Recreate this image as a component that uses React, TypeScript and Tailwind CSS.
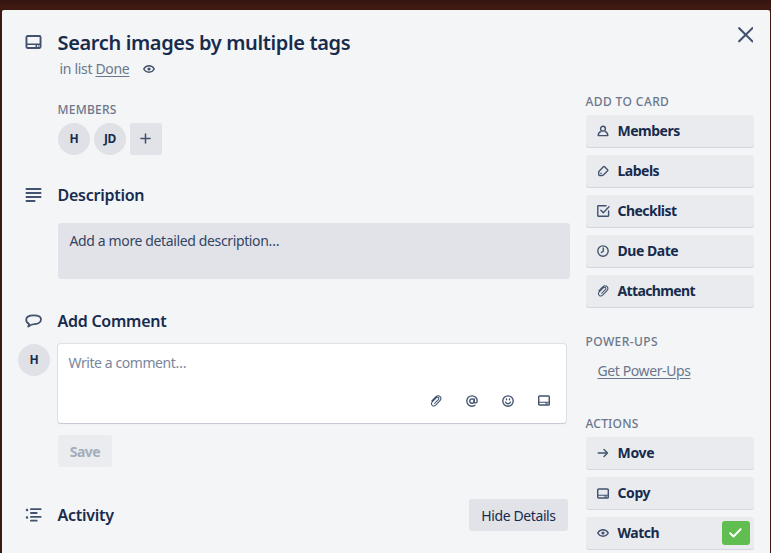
import React from "react";

type IconProps = { className?: string };

const CardIcon = ({ className = "" }: IconProps) => (
  <svg viewBox="0 0 16 14" fill="none" stroke="currentColor" className={className}>
    <rect x="0.95" y="0.95" width="14.1" height="12.1" rx="1.2" strokeWidth="1.9" />
    <path d="M1 9.300h14M10.800 9.300v3.500" strokeWidth="1.5" />
    <path d="M12.400 11h1.200" strokeWidth="1.200" />
  </svg>
);

const EyeIcon = ({ className = "" }: IconProps) => (
  <svg viewBox="0 0 12 8" fill="none" stroke="currentColor" className={className}>
    <path d="M.7 4C2 1.800 3.900.8 6 .8S10 1.800 11.300 4C10 6.200 8.100 7.200 6 7.200S2 6.200.7 4z" strokeWidth="1.4" strokeLinejoin="round" />
    <circle cx="6" cy="4" r="1.600" fill="currentColor" stroke="none" />
  </svg>
);

const PaperclipIcon = ({ className = "" }: IconProps) => (
  <svg viewBox="0 0 12 12" fill="none" stroke="currentColor" strokeWidth="1.050" strokeLinecap="round" className={className}>
    <path d="M1.800 5.800 5.700 2C7.100.6 9.100.7 10.100 1.700c1 1.100 1 2.700-.1 3.900L5.900 9.900c-1.100 1.100-2.700 1.300-3.700.4-1-1-.8-2.500.3-3.600l3.900-4c.7-.7 1.600-.7 2.100-.1.500.6.400 1.300-.2 2L4.600 8.500" />
  </svg>
);

const PersonIcon = ({ className = "" }: IconProps) => (
  <svg viewBox="0 0 12 12" fill="none" stroke="currentColor" strokeWidth="1.400" strokeLinejoin="round" className={className}>
    <circle cx="6" cy="3.700" r="2.400" />
    <path d="M3.900 6.300C2.100 7.100 1.200 8.500 1.200 10.600h9.600c0-2.100-.9-3.500-2.700-4.300" />
  </svg>
);

const LabelIcon = ({ className = "" }: IconProps) => (
  <svg viewBox="0 0 12 12" fill="none" stroke="currentColor" strokeWidth="1.350" strokeLinejoin="round" className={className}>
    <path d="M6.400 1.700q.6-.6 1.200 0l3 3q.5.500 0 1.100L6.400 9.900q-.6.600-1.400.6H2.600q-.9 0-.9-.9V7.300q0-.8.600-1.400z" />
    <circle cx="4" cy="8.200" r=".8" fill="currentColor" stroke="none" />
  </svg>
);

const ChecklistIcon = ({ className = "" }: IconProps) => (
  <svg viewBox="0 0 13 12" fill="none" stroke="currentColor" strokeWidth="1.400" strokeLinecap="round" strokeLinejoin="round" className={className}>
    <path d="M9 .8H1.200q-.4 0-.4.4v9.600q0 .4.400.4h10q.4 0 .4-.4V6" />
    <path d="m3.800 5.200 2.500 2.600 5.700-6" />
  </svg>
);

const ClockIcon = ({ className = "" }: IconProps) => (
  <svg viewBox="0 0 12 12" fill="none" stroke="currentColor" strokeWidth="1.350" strokeLinecap="round" className={className}>
    <circle cx="6" cy="6" r="5.200" />
    <path d="M6.300 3v3.100L4.400 7.500" />
  </svg>
);

const ArrowIcon = ({ className = "" }: IconProps) => (
  <svg viewBox="0 0 12 10" fill="none" stroke="currentColor" strokeWidth="1.400" strokeLinecap="round" strokeLinejoin="round" className={className}>
    <path d="M1.200 5h9.300M7 1.500 10.500 5 7 8.500" />
  </svg>
);

const TextIcon = ({ className = "" }: IconProps) => (
  <svg viewBox="0 0 17 14" stroke="currentColor" strokeWidth="1.800" strokeLinecap="round" className={className}>
    <path d="M1.400 1h14.200M1.400 5h14.200M1.400 9h14.200M1.400 13h8.200" />
  </svg>
);

const BubbleIcon = ({ className = "" }: IconProps) => (
  <svg viewBox="0 0 17 14" fill="none" stroke="currentColor" strokeWidth="1.800" strokeLinejoin="round" className={className}>
    <path d="M3.300 12.600 4 9.900C1.900 8.900 1.200 7.400 1.200 5.800 1.200 2.800 4.300 1.300 8.700 1.300S16 2.800 16 5.400s-3 4.600-7 4.700c-2 0-4 1.200-5.700 2.500z" />
  </svg>
);

const ActivityIcon = ({ className = "" }: IconProps) => (
  <svg viewBox="0 0 17 14" stroke="currentColor" strokeWidth="1.800" strokeLinecap="round" className={className}>
    <path d="M5.900 1.200h9.800M5.900 5h5.800M5.900 8.900h9.800M5.900 12.700h5.800" />
    <path d="M2 2h.01M2 9.500h.01" strokeWidth="2.500" />
  </svg>
);

const AtIcon = ({ className = "" }: IconProps) => (
  <svg viewBox="0 0 12 12" fill="none" stroke="currentColor" strokeWidth="1.350" strokeLinecap="round" className={className}>
    <circle cx="6" cy="6" r="2.200" />
    <path d="M8.200 3.800v2.800c0 1.900 3 1.900 3-.7C11.200 2.900 8.900.8 6 .8S.8 3.100.8 6s2.300 5.200 5.200 5.200c1.200 0 2.200-.3 3-.9" />
  </svg>
);

const SmileIcon = ({ className = "" }: IconProps) => (
  <svg viewBox="0 0 12 12" fill="none" stroke="currentColor" strokeWidth="1.350" strokeLinecap="round" className={className}>
    <circle cx="6" cy="6" r="5.200" />
    <path d="M3.500 7C4 8.200 4.900 8.700 6 8.700s2-.5 2.500-1.700" />
    <path d="M4.500 3.800v.9M7.500 3.800v.9" />
  </svg>
);

const Avatar = ({ children }: { children: React.ReactNode }) => (
  <span className="flex size-8 shrink-0 items-center justify-center rounded-full bg-[#dfe1e6] text-[12px] font-bold tracking-[-0.3px] text-[#172b4d]">
    {children}
  </span>
);

const SideLabel = ({ children, className = "tracking-[0.4px]" }: { children: React.ReactNode; className?: string }) => (
  <h3 className={`-ml-[0.5px] h-5 pt-px text-[12px] leading-5 font-medium text-[#6b778c] ${className}`}>{children}</h3>
);

type SideButtonProps = { icon: React.ReactNode; label: string; labelClass: string; checked?: boolean };

const SideButton = ({ icon, label, labelClass, checked }: SideButtonProps) => (
  <button className="flex h-8 w-full items-center rounded-[3px] bg-[#eaebef] pr-1 pl-[11px] text-left shadow-[0_1px_0_0_#d3d6dc]">
    <span className="flex w-[12px] justify-center text-[#42526e]">{icon}</span>
    <span className={`ml-[8.5px] text-[14px] leading-5 font-bold text-[#172b4d] ${labelClass}`}>{label}</span>
    {checked && (
      <span className="ml-auto flex h-6 w-7 items-center justify-center rounded-[3px] bg-[#61bd4f]">
        <svg viewBox="0 0 13 10" fill="none" stroke="white" strokeWidth="2" strokeLinecap="round" strokeLinejoin="round" className="mr-px h-[10px] w-[13px]">
          <path d="m1.200 5.200 3.300 3.300 7.100-7.300" />
        </svg>
      </span>
    )}
  </button>
);

const heading = "-ml-[0.5px] text-[16px] leading-6 font-semibold tracking-[-0.26px] text-[#172b4d]";

export default function App() {
  return (
    <div className="h-[553px] w-[771px] overflow-hidden bg-[#3e1912] bg-linear-to-b from-[#34130f] to-[#3e1912] to-[6px] pt-[10px] pr-px pl-[2px] font-['Noto_Sans','Liberation_Sans',sans-serif]">
      <div className="flex h-[543px] rounded-t-[2px] bg-[#f4f5f7]">
        <main className="w-[568px] shrink-0 text-[#42526e]">
          <header className="flex pt-5">
            <div className="w-14 shrink-0 pt-[5px] pl-[23px]">
              <CardIcon className="h-[14px] w-[17px]" />
            </div>
            <div>
              <h2 className="-ml-[0.5px] text-[20px] leading-[26px] font-semibold tracking-[-0.36px] whitespace-nowrap text-[#172b4d]">
                Search images by multiple tags
              </h2>
              <p className="mt-[3px] ml-[1.500px] flex items-center text-[14px] leading-5 tracking-[-0.32px] text-[#6b778c]">
                in list&nbsp;<span className="underline underline-offset-2">Done</span>
                <EyeIcon className="ml-[14px] h-2 w-3 text-[#42526e]" />
              </p>
            </div>
          </header>

          <section className="mt-5 ml-14">
            <SideLabel className="tracking-[0.25px]">MEMBERS</SideLabel>
            <div className="mt-1 flex gap-1">
              <Avatar>H</Avatar>
              <Avatar>JD</Avatar>
              <button className="flex size-8 items-center justify-center rounded-[2px] bg-[#e2e3e9]">
                <svg viewBox="0 0 12 12" stroke="currentColor" strokeWidth="1.700" strokeLinecap="round" className="mr-px mb-px size-[11px]">
                  <path d="M6 1v10M1 6h10" />
                </svg>
              </button>
            </div>
          </section>

          <section className="mt-7">
            <div className="flex h-6 items-center">
              <div className="w-14 pl-[23px]">
                <TextIcon className="h-[14px] w-[17px]" />
              </div>
              <h3 className={heading}>Description</h3>
            </div>
            <div className="mt-4 ml-14 h-14 w-[512px] rounded-[3px] bg-[#e2e3e9] px-[11.500px] py-2 text-[14px] leading-5 tracking-[-0.37px] text-[#344563]">
              Add a more detailed description…
            </div>
          </section>

          <section className="mt-[30px]">
            <div className="flex h-6 items-center">
              <div className="w-14 pl-[23px]">
                <BubbleIcon className="h-[14px] w-[17px]" />
              </div>
              <h3 className={heading}>Add Comment</h3>
            </div>
            <div className="mt-[11px] flex gap-2 pl-4">
              <Avatar>H</Avatar>
              <div className="flex h-[79px] w-[508px] shrink-0 flex-col justify-between rounded-[3px] bg-white pt-[9px] pr-4 pb-4 pl-[10.500px] shadow-[0_1px_1px_0_#c1c7d0,0_0_0_1px_#dfe1e6]">
                <span className="text-[14px] leading-5 tracking-[-0.43px] text-[#7a869a]">Write a comment…</span>
                <span className="flex h-[13px] items-center justify-end gap-6">
                  <PaperclipIcon className="h-3 w-3" />
                  <AtIcon className="size-3" />
                  <SmileIcon className="size-3" />
                  <CardIcon className="h-[11px] w-3" />
                </span>
              </div>
            </div>
            <button className="mt-3 ml-14 flex h-8 w-[54px] items-center justify-center rounded-[3px] bg-[#eaecf0] text-[14px] font-bold tracking-[-0.5px] text-[#a5adba]">
              Save
            </button>
          </section>

          <section className="mt-8 flex h-8 items-center">
            <div className="w-14 pl-[23px]">
              <ActivityIcon className="h-[14px] w-[17px]" />
            </div>
            <h3 className={heading}>Activity</h3>
            <button className="mr-[2px] ml-auto flex h-8 w-[99px] items-center justify-center rounded-[3px] bg-[#e2e3e9] text-[14px] tracking-[-0.4px] text-[#172b4d]">
              Hide Details
            </button>
          </section>
        </main>

        <aside className="ml-4 w-[168px] shrink-0">
          <div className="flex h-[81px] justify-end pt-4">
            <svg viewBox="0 0 16 16" stroke="#42526e" strokeWidth="2.200" strokeLinecap="round" className="mt-px mr-[1px] size-[15.500px]">
              <path d="M1.200 1.200l13.600 13.600M14.800 1.200 1.200 14.800" />
            </svg>
          </div>
          <SideLabel>ADD TO CARD</SideLabel>
          <div className="mt-1 flex flex-col gap-2">
            <SideButton icon={<PersonIcon className="size-3" />} label="Members" labelClass="tracking-[-0.5px]" />
            <SideButton icon={<LabelIcon className="size-3" />} label="Labels" labelClass="tracking-[-0.5px]" />
            <SideButton icon={<ChecklistIcon className="h-3 w-[13px] shrink-0" />} label="Checklist" labelClass="tracking-[-0.53px]" />
            <SideButton icon={<ClockIcon className="size-3" />} label="Due Date" labelClass="tracking-[-0.47px]" />
            <SideButton icon={<PaperclipIcon className="size-3" />} label="Attachment" labelClass="tracking-[-0.63px]" />
          </div>
          <div className="mt-6">
            <SideLabel>POWER-UPS</SideLabel>
            <a className="mt-[10px] ml-[11.500px] block h-5 text-[14px] leading-5 tracking-[-0.4px] text-[#6b778c] underline underline-offset-2">Get Power-Ups</a>
          </div>
          <div className="mt-8">
            <SideLabel className="tracking-[0.2px]">ACTIONS</SideLabel>
            <div className="mt-1 flex flex-col gap-2">
              <SideButton icon={<ArrowIcon className="h-[10px] w-3" />} label="Move" labelClass="tracking-[-0.3px]" />
              <SideButton icon={<CardIcon className="h-[11px] w-3" />} label="Copy" labelClass="tracking-[-0.4px]" />
              <SideButton icon={<EyeIcon className="h-2 w-3" />} label="Watch" labelClass="tracking-[-0.5px]" checked />
            </div>
          </div>
        </aside>
      </div>
    </div>
  );
}
